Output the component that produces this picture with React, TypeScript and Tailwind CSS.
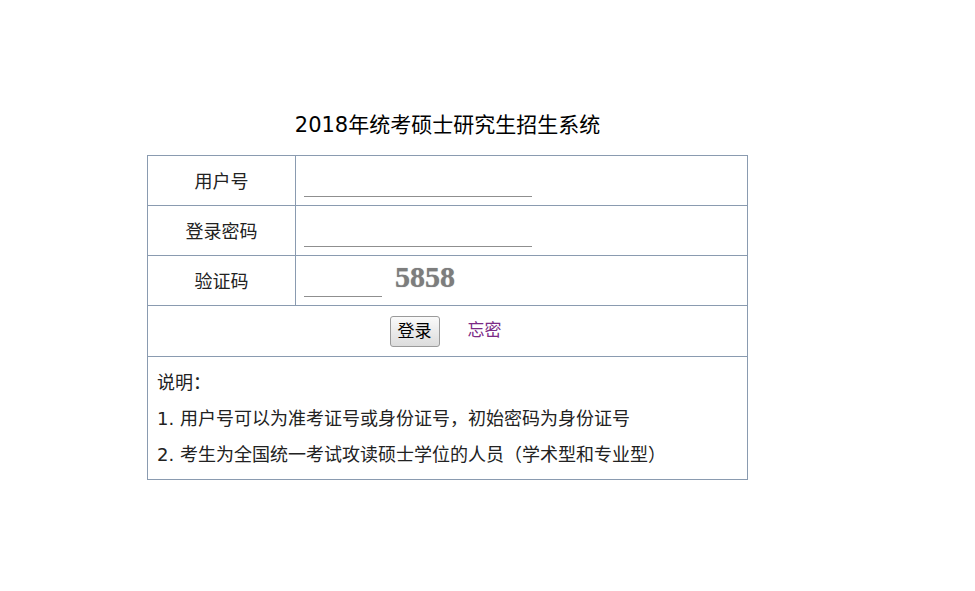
const cjk = "font-['Verdana','DejaVu_Sans','Noto_Sans_CJK_SC',sans-serif]";

function Row({ label, children }: { label: string; children: React.ReactNode }) {
    return (
        <div className="grid grid-cols-[148px_1fr] h-[50px] border-b border-[#8a9bb0]">
            <div className="flex items-center justify-center pt-[2px] border-r border-[#8a9bb0] text-[18px] text-[#222]">
                {label}
            </div>
            <div className="flex items-center pl-[8px] pt-[2px]">{children}</div>
        </div>
    );
}

export default function App() {
    return (
        <div className={`min-h-[591px] bg-white ${cjk}`}>
            <div className="ml-[147px] w-[601px] pt-[110px]">
                <h1 className="text-center text-[21px] leading-[30px] text-black mb-[15px]">
                    2018年统考硕士研究生招生系统
                </h1>

                <div className="border border-b-0 border-[#8a9bb0]">
                    <Row label="用户号">
                        <input
                            type="text"
                            className="w-[228px] h-[30px] border-0 border-b border-[#8f8f8f] outline-none"
                        />
                    </Row>
                    <Row label="登录密码">
                        <input
                            type="password"
                            className="w-[228px] h-[30px] border-0 border-b border-[#8f8f8f] outline-none"
                        />
                    </Row>
                    <Row label="验证码">
                        <input
                            type="text"
                            className="w-[78px] h-[30px] border-0 border-b border-[#8f8f8f] outline-none"
                        />
                        <span className="ml-[13px] -mt-[10px] font-['Liberation_Serif',serif] font-bold text-[30px] leading-none text-[#7d7d7d] [text-shadow:0_0_1px_#9a9a9a]">
                            5858
                        </span>
                    </Row>

                    <div className="flex items-center justify-center h-[51px] border-b border-[#8a9bb0] pr-[4px]">
                        <button className="w-[50px] h-[31px] rounded-[3px] border border-[#9a9a9a] bg-gradient-to-b from-[#fafafa] to-[#dcdcdc] text-[17px] text-black leading-none">
                            登录
                        </button>
                        <a href="#" className="ml-[28px] text-[17px] text-[#7b2a86]">
                            忘密
                        </a>
                    </div>

                    <div className="border-b border-[#8a9bb0] pl-[9px] pt-[14px] pb-[6px] text-[18px] leading-[36px] text-[#222]">
                        <div className="leading-[24px] mb-[6px]">说明：</div>
                        <div>1. 用户号可以为准考证号或身份证号，初始密码为身份证号</div>
                        <div>2. 考生为全国统一考试攻读硕士学位的人员（学术型和专业型）</div>
                    </div>
                </div>
            </div>
        </div>
    );
}
